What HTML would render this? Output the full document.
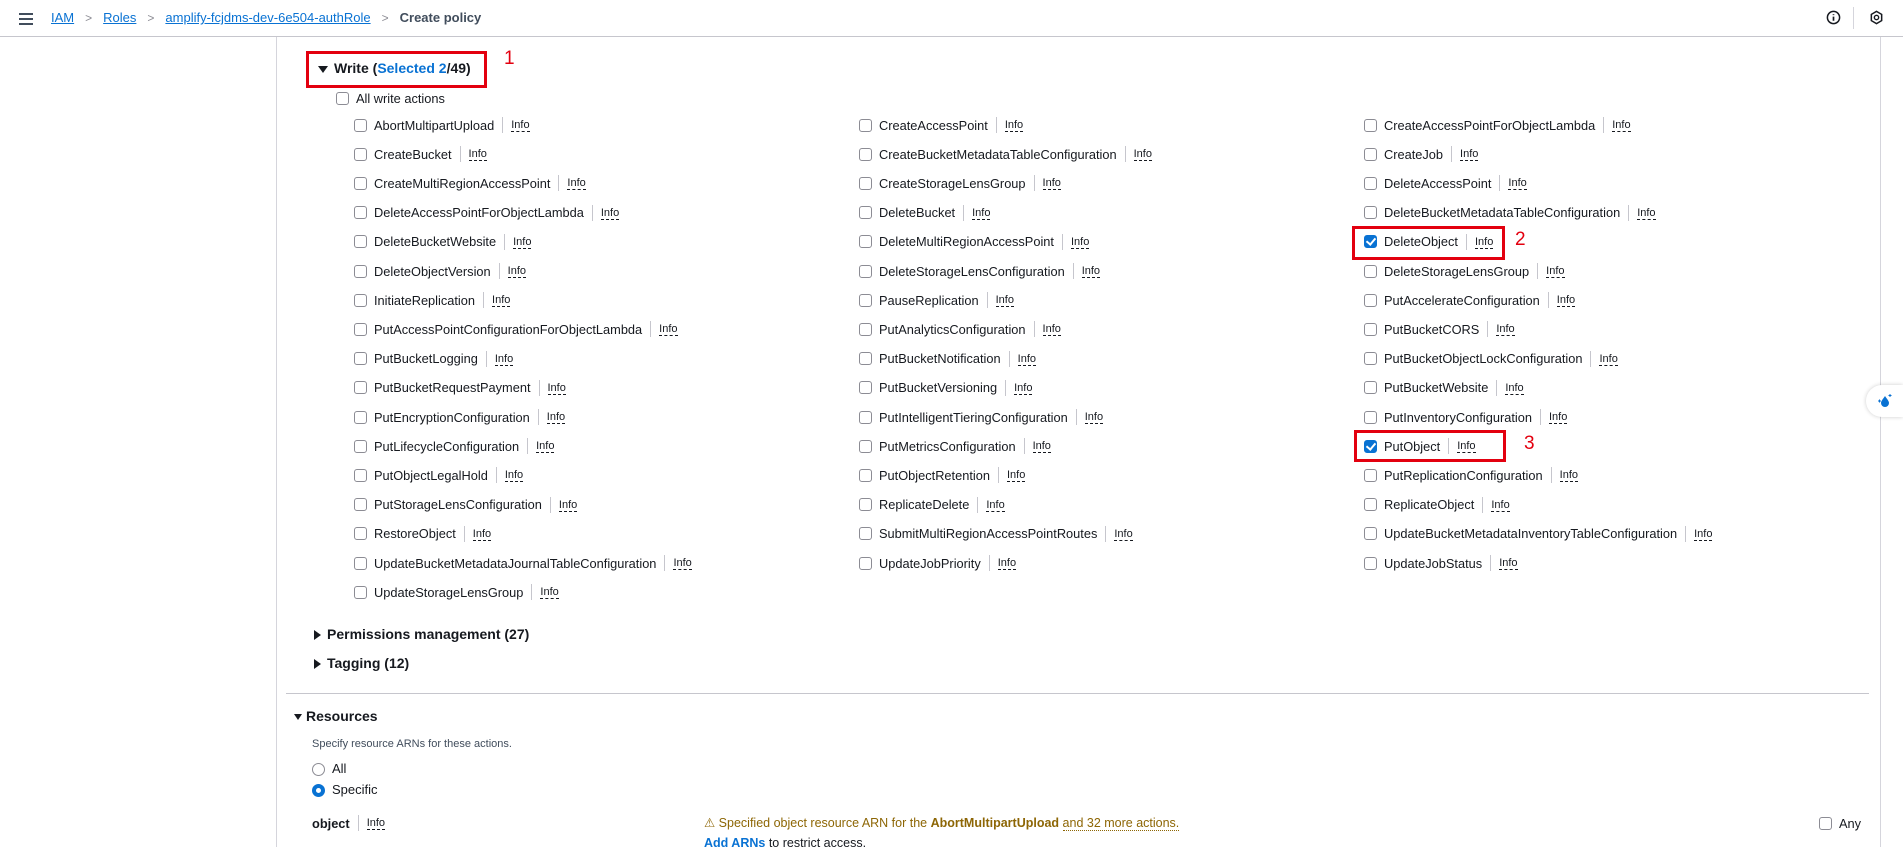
<!DOCTYPE html>
<html><head><meta charset="utf-8"><style>
*{box-sizing:border-box;margin:0;padding:0}
body{width:1903px;height:845px;overflow:hidden;background:#fff;font-family:"Liberation Sans",Arial,sans-serif;color:#16191f;position:relative}
.hdr{position:absolute;left:0;top:0;width:1903px;height:37px;border-bottom:1px solid #c6c6cd;background:#fff}
.crumb{position:absolute;top:10px;left:51px;font-size:13px;display:flex;gap:0;align-items:center}
.crumb a{color:#0972d3;text-decoration:underline}
.crumb .sep{color:#8c8c94;margin:0 11px;font-size:12px}
.side{position:absolute;left:276px;top:37px;width:1px;height:810px;background:#d5d5dc}
.rside{position:absolute;left:1880px;top:37px;width:1px;height:810px;background:#d5d5dc}
.row{position:absolute;display:flex;align-items:center;font-size:12.8px;white-space:nowrap;height:18px}
.cb{width:13px;height:13px;border:1.5px solid #8c8c94;border-radius:3px;margin-right:7px;flex:none;position:relative}
.cb.on{background:#0972d3;border-color:#0972d3}
.cb.on:after{content:"";position:absolute;left:3px;top:0px;width:4px;height:7px;border:solid #fff;border-width:0 2px 2px 0;transform:rotate(40deg)}
.info{font-size:11px;color:#16191f;border-left:1px solid #c6c6cd;padding-left:8px;margin-left:8px;line-height:16px}
.info span{border-bottom:1px dashed #16191f}
.red{position:absolute;border:3px solid #e3000f}
.num{position:absolute;color:#e3000f;font-size:19px}
.h{position:absolute;font-weight:bold;font-size:14px}
.tri{display:inline-block;width:0;height:0;margin-right:6px;vertical-align:middle}
.down{border-left:5px solid transparent;border-right:5px solid transparent;border-top:7px solid #16191f}
.right{border-top:5px solid transparent;border-bottom:5px solid transparent;border-left:7px solid #16191f}
.radio{width:13px;height:13px;border-radius:50%;border:1.5px solid #8c8c94;display:inline-block;vertical-align:middle;margin-right:7px}
.radio.on{border:4px solid #0972d3}
</style></head><body>
<div class="hdr">
<div style="position:absolute;left:19px;top:13px;width:14px;">
<div style="height:2px;background:#414d5c;margin-bottom:3px"></div><div style="height:2px;background:#414d5c;margin-bottom:3px"></div><div style="height:2px;background:#414d5c"></div></div>
<div class="crumb"><a>IAM</a><span class="sep">&gt;</span><a>Roles</a><span class="sep">&gt;</span><a>amplify-fcjdms-dev-6e504-authRole</a><span class="sep">&gt;</span><span style="color:#414d5c;font-weight:bold">Create policy</span></div>
<svg style="position:absolute;left:1826px;top:10px" width="15" height="15" viewBox="0 0 16 16"><circle cx="8" cy="8" r="6.5" fill="none" stroke="#16191f" stroke-width="1.6"/><path d="M8 7v4.5M8 4.5v1" stroke="#16191f" stroke-width="1.8"/></svg>
<div style="position:absolute;left:1853px;top:7px;width:1px;height:22px;background:#d5d5dc"></div>
<svg style="position:absolute;left:1869px;top:10px" width="15" height="15" viewBox="0 0 16 16"><path d="M8 1.5l5.5 3.2v6.6L8 14.5l-5.5-3.2V4.7z" fill="none" stroke="#16191f" stroke-width="1.6"/><circle cx="8" cy="8" r="2.3" fill="none" stroke="#16191f" stroke-width="1.5"/></svg>
</div>
<div class="side"></div><div class="rside"></div>
<div style="position:absolute;left:1866px;top:385px;width:37px;height:32px;border-radius:16px 0 0 16px;background:#fff;box-shadow:0 0 4px rgba(0,0,0,.2)"><svg style="position:absolute;left:10px;top:7px" width="18" height="18" viewBox="0 0 18 18"><path d="M9 4c2 3 4 5 4 7a4 4 0 0 1-8 0c0-2 2-4 4-7z" fill="#0972d3"/><path d="M2 9h3M3.5 7.5v3M14 2v3M12.5 3.5h3" stroke="#0972d3" stroke-width="1"/></svg></div>

<div class="h" style="left:318px;top:60px"><span class="tri down"></span>Write (<span style="color:#0972d3">Selected 2</span>/49)</div>
<div class="red" style="left:306px;top:51px;width:181px;height:37px"></div>
<div class="num" style="left:504px;top:48px">1</div>
<div class="row" style="left:336px;top:89px"><div class="cb"></div>All write actions</div>

<div id="g"></div>
<div class="red" style="left:1352px;top:226px;width:153px;height:34px"></div>
<div class="num" style="left:1515px;top:229px">2</div>
<div class="red" style="left:1354px;top:430px;width:152px;height:32px"></div>
<div class="num" style="left:1524px;top:433px">3</div>

<div class="h" style="left:314px;top:626px"><span class="tri right"></span>Permissions management (27)</div>
<div class="h" style="left:314px;top:655px"><span class="tri right"></span>Tagging (12)</div>
<div style="position:absolute;left:286px;top:693px;width:1583px;height:1px;background:#c6c6cd"></div>
<div class="h" style="left:294px;top:708px"><span class="tri down" style="border-left-width:4px;border-right-width:4px;border-top-width:6px;margin-right:4px"></span>Resources</div>
<div style="position:absolute;left:312px;top:738px;font-size:11px;color:#414d5c">Specify resource ARNs for these actions.</div>
<div style="position:absolute;left:312px;top:761px;font-size:13px"><span class="radio"></span>All</div>
<div style="position:absolute;left:312px;top:782px;font-size:13px"><span class="radio on"></span>Specific</div>
<div class="row" style="left:312px;top:814px;font-weight:bold">object<span class="info" style="font-weight:normal"><span>Info</span></span></div>
<div style="position:absolute;left:704px;top:815px;font-size:12.5px;color:#8d6605">&#9888; Specified object resource ARN for the <b>AbortMultipartUpload</b> <span style="border-bottom:1px dotted #8d6605">and 32 more actions.</span></div>
<div style="position:absolute;left:704px;top:836px;font-size:12.5px"><span style="color:#0972d3;font-weight:bold">Add ARNs</span> to restrict access.</div>
<div class="row" style="left:1819px;top:814px"><div class="cb"></div>Any</div>

<script>
var cols=[[354,["AbortMultipartUpload","CreateBucket","CreateMultiRegionAccessPoint","DeleteAccessPointForObjectLambda","DeleteBucketWebsite","DeleteObjectVersion","InitiateReplication","PutAccessPointConfigurationForObjectLambda","PutBucketLogging","PutBucketRequestPayment","PutEncryptionConfiguration","PutLifecycleConfiguration","PutObjectLegalHold","PutStorageLensConfiguration","RestoreObject","UpdateBucketMetadataJournalTableConfiguration","UpdateStorageLensGroup"]],
[859,["CreateAccessPoint","CreateBucketMetadataTableConfiguration","CreateStorageLensGroup","DeleteBucket","DeleteMultiRegionAccessPoint","DeleteStorageLensConfiguration","PauseReplication","PutAnalyticsConfiguration","PutBucketNotification","PutBucketVersioning","PutIntelligentTieringConfiguration","PutMetricsConfiguration","PutObjectRetention","ReplicateDelete","SubmitMultiRegionAccessPointRoutes","UpdateJobPriority"]],
[1364,["CreateAccessPointForObjectLambda","CreateJob","DeleteAccessPoint","DeleteBucketMetadataTableConfiguration","DeleteObject","DeleteStorageLensGroup","PutAccelerateConfiguration","PutBucketCORS","PutBucketObjectLockConfiguration","PutBucketWebsite","PutInventoryConfiguration","PutObject","PutReplicationConfiguration","ReplicateObject","UpdateBucketMetadataInventoryTableConfiguration","UpdateJobStatus"]]];
var h="";cols.forEach(function(c){c[1].forEach(function(n,i){var on=(n=="DeleteObject"||n=="PutObject")?" on":"";h+='<div class="row" style="left:'+c[0]+'px;top:'+(116+i*29.2)+'px"><div class="cb'+on+'"></div>'+n+'<span class="info"><span>Info</span></span></div>';});});
document.getElementById("g").outerHTML=h;
</script>
</body></html>
